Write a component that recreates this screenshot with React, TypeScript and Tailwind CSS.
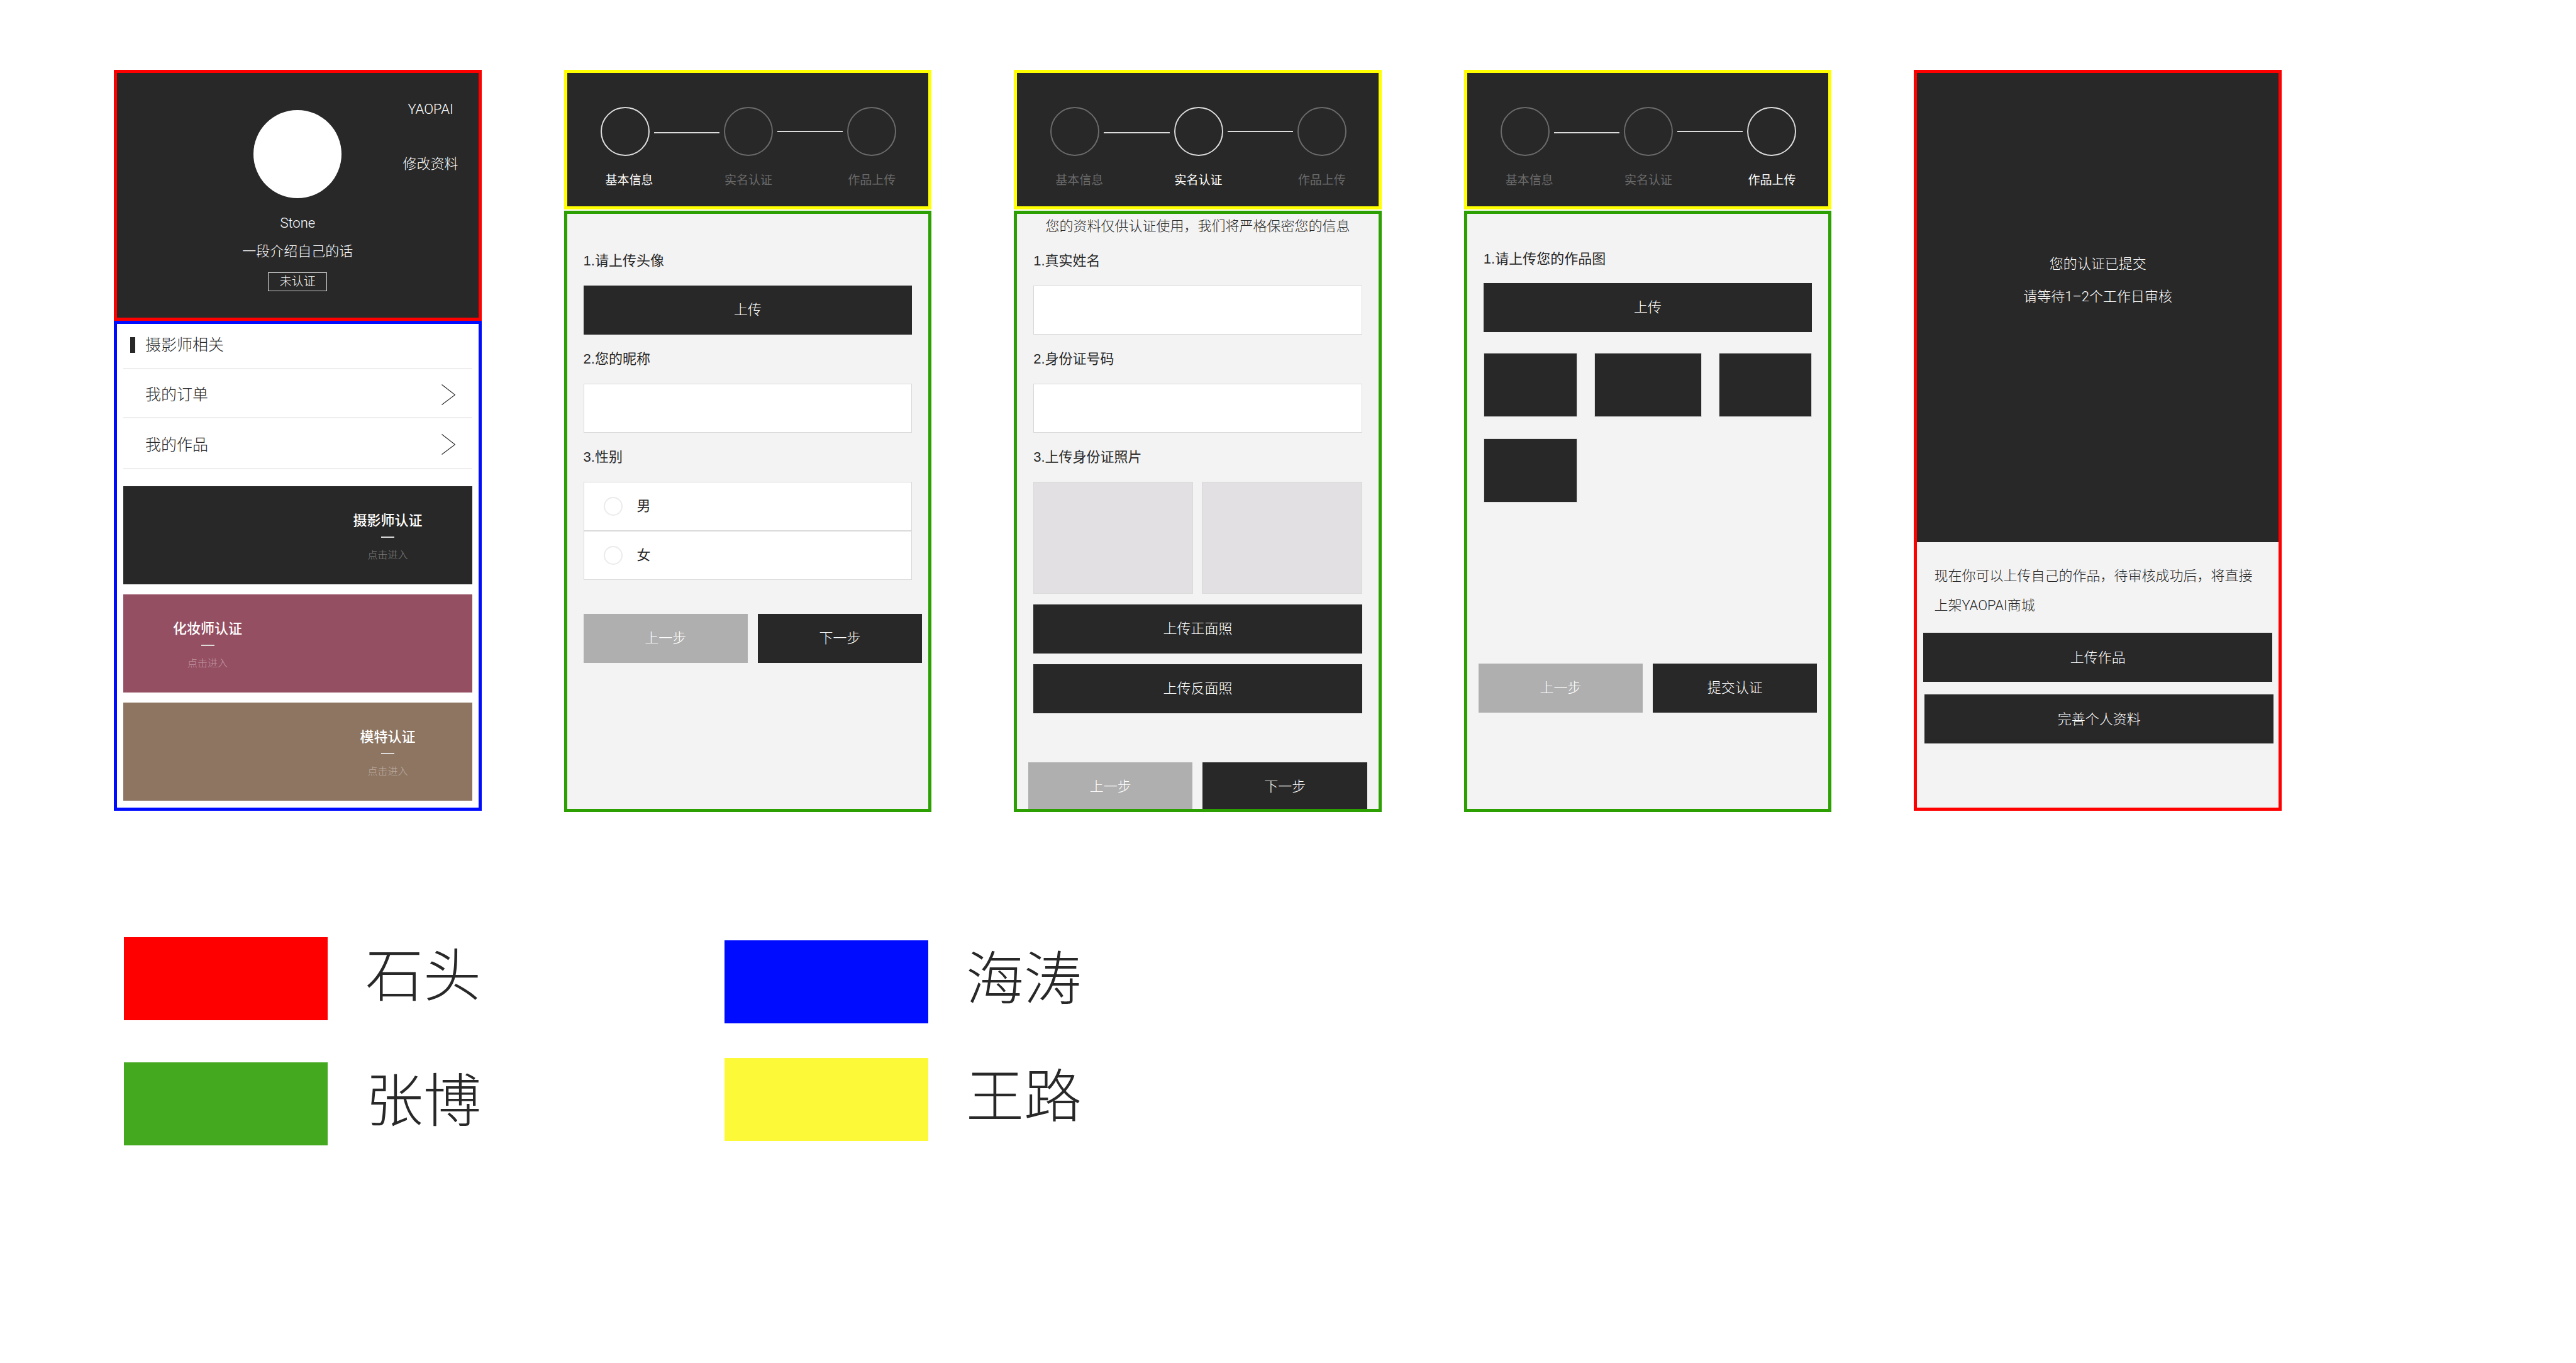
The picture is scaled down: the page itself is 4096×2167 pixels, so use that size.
import type { ReactNode } from "react";

const steps = ["基本信息", "实名认证", "作品上传"];

function Stepper({ active }: { active: number }) {
  return (
    <header className="border-5 border-[#ffff00] bg-[#282828] pt-[54px] pr-[51px] pb-[26px] pl-[53px]">
      <div className="flex items-center">
        {steps.map((step, i) => (
          <div key={step} className={i === 0 ? "flex items-center" : "flex flex-1 items-center"}>
            {i > 0 && (
              <span className={i === 1 ? "mx-[7px] mt-1 h-0.5 flex-1 bg-[#dcdcdc]" : "mx-[7px] h-0.5 flex-1 bg-[#dcdcdc]"} />
            )}
            <span
              className={
                i === active
                  ? "size-[78px] shrink-0 rounded-full border-2 border-[#dcdcdc]"
                  : "size-[78px] shrink-0 rounded-full border-2 border-[#6b6b6b]"
              }
            />
          </div>
        ))}
      </div>
      <ol className="mt-6 flex justify-between text-[19px] leading-[30px]">
        {steps.map((step, i) => (
          <li
            key={step}
            className={[
              "whitespace-nowrap",
              i === 0 ? "w-[84px] pl-2" : "w-[78px] text-center",
              i === 1 ? "mr-1.5" : "",
              i === active ? "text-white" : "text-[#6b6b6b]",
            ].join(" ")}
            aria-current={i === active ? "step" : undefined}
          >
            {step}
          </li>
        ))}
      </ol>
    </header>
  );
}

function WizardPhone({ active, children }: { active: number; children: ReactNode }) {
  return (
    <section className="flex flex-col gap-0.5">
      <Stepper active={active} />
      <form className="flex-1 overflow-hidden border-5 border-[#2ca000] bg-[#f3f3f3] text-[22px] leading-8 text-[#282828]">
        {children}
      </form>
    </section>
  );
}

function DarkButton({ children }: { children: ReactNode }) {
  return (
    <button type="button" className="block h-[78px] w-full bg-[#282828] text-center text-[22px] font-light text-white">
      {children}
    </button>
  );
}

function TextField({ id, label }: { id: string; label: string }) {
  return (
    <>
      <label htmlFor={id} className="block">
        {label}
      </label>
      <input id={id} type="text" className="block h-[78px] w-full border border-[#d9d9d9] bg-white px-6" />
    </>
  );
}

function NavButtons({ next }: { next: string }) {
  return (
    <div className="grid grid-cols-2 gap-4">
      <button type="button" className="h-[78px] bg-[#afafaf] text-[22px] font-light text-white">
        上一步
      </button>
      <DarkButton>{next}</DarkButton>
    </div>
  );
}

function Chevron() {
  return (
    <svg viewBox="0 0 22 33" className="h-[33px] w-[22px]" fill="none" stroke="#282828" strokeWidth="1.1">
      <path d="M0.5 0.5 L21.5 16.8 L0.5 32.5" />
    </svg>
  );
}

function MenuLink({ children, className }: { children: ReactNode; className: string }) {
  return (
    <a href="#" className={`flex items-center justify-between border-b-2 border-[#eeeeee] pt-1 pr-[27px] pl-[35px] ${className}`}>
      {children}
      <Chevron />
    </a>
  );
}

function RoleCard({ title, className }: { title: string; className: string }) {
  return (
    <button type="button" className={`flex h-[156px] w-full items-start px-[79px] pt-[39px] text-white ${className}`}>
      <span className="flex w-[110px] flex-col items-center">
        <span className="text-[22px] leading-8 font-medium">{title}</span>
        <span className="mt-[9px] h-0.5 w-[21px] bg-[#dcdcdc]" />
        <span className="mt-4 text-[16px] leading-6 font-light text-white/40">点击进入</span>
      </span>
    </button>
  );
}

function ProfilePhone() {
  return (
    <section className="self-start">
      <header className="grid grid-cols-[1fr_auto_1fr] border-5 border-[#ff0000] bg-[#282828] pb-[42px] font-[Roboto,'Noto_Sans_CJK_SC',sans-serif] text-[22px] leading-8 font-light text-white">
        <div className="col-start-2 flex flex-col items-center pt-[59px]">
          <div className="size-[140px] rounded-full bg-white" />
          <p className="mt-6">Stone</p>
          <p className="mt-[13px]">一段介绍自己的话</p>
          <span className="mt-[17px] flex h-[30px] w-[94px] items-center justify-center border border-[#dcdcdc] text-[19px]">
            未认证
          </span>
        </div>
        <nav className="flex flex-col items-center gap-[55px] justify-self-end pt-[42px] pr-8">
          <a href="#">YAOPAI</a>
          <a href="#">修改资料</a>
        </nav>
      </header>
      <div className="border-5 border-[#000cff] bg-white px-[10px] pb-[11px] text-[25px] leading-8 font-light text-[#282828]">
        <h2 className="flex h-[72px] items-center gap-4 border-b-2 border-[#eeeeee] pb-1 pl-[11px]">
          <span className="h-[25px] w-2 bg-[#282828]" />
          摄影师相关
        </h2>
        <MenuLink className="h-[78px]">我的订单</MenuLink>
        <MenuLink className="h-[81px]">我的作品</MenuLink>
        <div className="mt-[27px] flex flex-col gap-4">
          <RoleCard title="摄影师认证" className="justify-end bg-[#282828]" />
          <RoleCard title="化妆师认证" className="justify-start bg-[#954f63]" />
          <RoleCard title="模特认证" className="justify-end bg-[#8d7562]" />
        </div>
      </div>
    </section>
  );
}

function GenderOption({ label }: { label: string }) {
  return (
    <label className="flex h-[78px] items-center gap-[23px] border border-[#d9d9d9] bg-white pl-[31px]">
      <input type="radio" name="gender" className="size-[30px] appearance-none rounded-full border-2 border-[#ebebeb] checked:bg-[#282828]" />
      {label}
    </label>
  );
}

function BasicInfoPhone() {
  return (
    <WizardPhone active={0}>
      <div className="flex flex-col gap-[23px] px-[26px] pt-[59px]">
        <p>1.请上传头像</p>
        <DarkButton>上传</DarkButton>
        <TextField id="nickname" label="2.您的昵称" />
        <p>3.性别</p>
        <div>
          <GenderOption label="男" />
          <GenderOption label="女" />
        </div>
      </div>
      <div className="mt-[54px] pr-[10px] pl-[26px]">
        <NavButtons next="下一步" />
      </div>
    </WizardPhone>
  );
}

function IdentityPhone() {
  return (
    <WizardPhone active={1}>
      <div className="flex flex-col gap-[23px] px-[26px] pt-1">
        <p className="text-center font-light">您的资料仅供认证使用，我们将严格保密您的信息</p>
        <TextField id="real-name" label="1.真实姓名" />
        <TextField id="id-number" label="2.身份证号码" />
        <p>3.上传身份证照片</p>
        <div className="flex flex-col gap-[17px]">
          <div className="grid grid-cols-2 gap-[14px]">
            <div className="h-[178px] border border-[#dadada] bg-[#e2e0e2]" />
            <div className="h-[178px] border border-[#dadada] bg-[#e2e0e2]" />
          </div>
          <DarkButton>上传正面照</DarkButton>
          <DarkButton>上传反面照</DarkButton>
        </div>
      </div>
      <div className="mt-[78px] -mb-1 px-[18px]">
        <NavButtons next="下一步" />
      </div>
    </WizardPhone>
  );
}

function WorksPhone() {
  return (
    <WizardPhone active={2}>
      <div className="flex flex-col gap-[22px] px-[26px] pt-[56px]">
        <p>1.请上传您的作品图</p>
        <DarkButton>上传</DarkButton>
      </div>
      <div className="mt-[33px] grid grid-cols-[149fr_171fr_149fr] gap-x-[27px] gap-y-[34px] px-[26px]">
        {[1, 2, 3, 4].map((n) => (
          <div key={n} className="h-[102px] border border-[#dadada] bg-[#282828]" />
        ))}
      </div>
      <div className="mt-[256px] px-[18px]">
        <NavButtons next="提交认证" />
      </div>
    </WizardPhone>
  );
}

function SubmittedPhone() {
  return (
    <section className="self-start border-5 border-[#ff0000] bg-[#f3f3f3] pb-[102px] font-[Roboto,'Noto_Sans_CJK_SC',sans-serif] text-[22px] font-light text-[#282828]">
      <div className="flex flex-col gap-5 bg-[#282828] pt-[288px] pb-[374px] text-center leading-8 text-white">
        <p>您的认证已提交</p>
        <p>请等待1–2个工作日审核</p>
      </div>
      <p className="px-[27px] pt-[30px] leading-[47px]">现在你可以上传自己的作品，待审核成功后，将直接上架YAOPAI商城</p>
      <div className="mt-5 mr-[10px] ml-[10px]">
        <DarkButton>上传作品</DarkButton>
      </div>
      <div className="mt-5 mr-2 ml-3">
        <DarkButton>完善个人资料</DarkButton>
      </div>
    </section>
  );
}

function LegendItem({ name, color }: { name: string; color: string }) {
  return (
    <li className="flex items-center gap-[60px]">
      <span className={`h-[132px] w-[324px] ${color}`} />
      <span className="pb-2 text-[92px] leading-none font-light">{name}</span>
    </li>
  );
}

export default function App() {
  return (
    <main className="min-h-screen bg-white pt-[111px] font-['Liberation_Sans','Noto_Sans_CJK_SC',sans-serif] text-[#282828]" lang="zh-CN">
      <div className="grid grid-cols-5 gap-[131px] pr-[468px] pl-[181px]">
        <ProfilePhone />
        <BasicInfoPhone />
        <IdentityPhone />
        <WorksPhone />
        <SubmittedPhone />
      </div>
      <div className="mt-[199px] flex items-start gap-[387px] pl-[197px]">
        <ul className="flex flex-col gap-[67px]">
          <LegendItem name="石头" color="bg-[#ff0000]" />
          <LegendItem name="张博" color="bg-[#44a91f]" />
        </ul>
        <ul className="flex flex-col gap-[55px] pt-[5px]">
          <LegendItem name="海涛" color="bg-[#000cff]" />
          <LegendItem name="王路" color="bg-[#fcf938]" />
        </ul>
      </div>
    </main>
  );
}
